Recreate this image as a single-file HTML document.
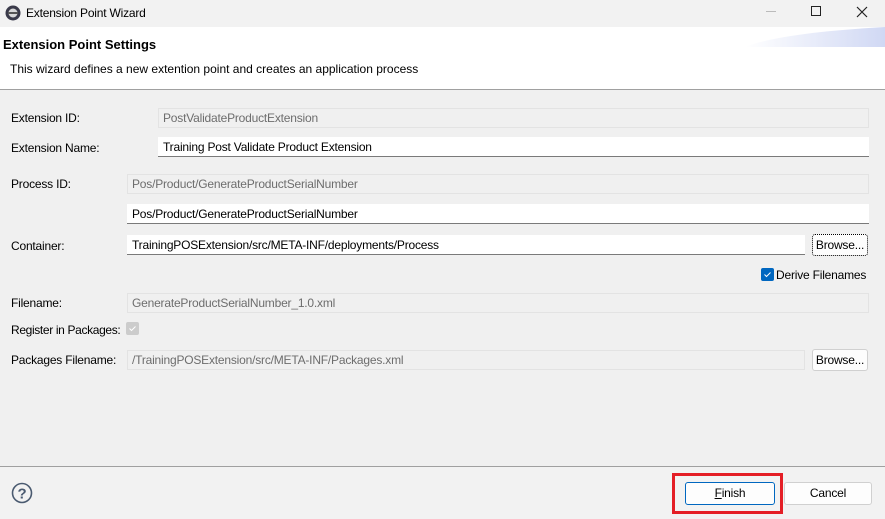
<!DOCTYPE html>
<html><head><style>
*{box-sizing:border-box;margin:0;padding:0}
body{width:885px;height:519px;background:#f0f0f0;font-family:"Liberation Sans",sans-serif;font-size:12px;color:#000;position:relative;overflow:hidden;letter-spacing:-0.2px}
.a{position:absolute;white-space:nowrap}
.in{position:absolute;height:20px;background:#fff;border-bottom:1px solid #7a7a7a;padding:3px 5px;white-space:nowrap}
.dis{position:absolute;height:20px;background:#f0f0f0;border:1px solid #e3e3e3;color:#6d6d6d;padding:2px 4px;white-space:nowrap}
.btn{position:absolute;background:#fdfdfd;border:1px solid #d0d0d0;border-radius:3px;text-align:center;line-height:20px}
</style></head><body>
<div class="a" style="left:0;top:0;width:885px;height:27px;background:#f2f2f2"></div>
<svg class="a" style="left:4px;top:4px" width="18" height="18" viewBox="0 0 18 18"><circle cx="9" cy="9" r="7.5" fill="#3a3a4a"/><circle cx="9" cy="9" r="4.5" fill="#d8d8d8"/><rect x="4" y="8" width="10" height="2" fill="#555"/></svg>
<div class="a" style="left:26px;top:6px">Extension Point Wizard</div>
<div class="a" style="left:766px;top:11px;width:10px;height:1px;background:#bbb"></div>
<div class="a" style="left:811px;top:6px;width:10px;height:10px;border:1px solid #222"></div>
<svg class="a" style="left:856px;top:6px" width="12" height="12"><path d="M1 1L11 11M11 1L1 11" stroke="#222" stroke-width="1.2"/></svg>
<div class="a" style="left:0;top:27px;width:885px;height:63px;background:#fff"></div>
<svg class="a" style="left:740px;top:27px" width="145" height="20"><defs><linearGradient id="g"><stop offset="0" stop-color="#fff"/><stop offset="1" stop-color="#d0d8f4"/></linearGradient></defs><path d="M5 20Q40 6 145 0V20Z" fill="url(#g)"/></svg>
<div class="a" style="left:3px;top:37px;font-weight:bold;font-size:13px;letter-spacing:0">Extension Point Settings</div>
<div class="a" style="left:10px;top:62px;letter-spacing:0">This wizard defines a new extention point and creates an application process</div>
<div class="a" style="left:0;top:89px;width:885px;height:1px;background:#a0a0a0"></div>
<div class="a" style="left:11px;top:111px">Extension ID:</div>
<div class="dis" style="left:158px;top:108px;width:711px">PostValidateProductExtension</div>
<div class="a" style="left:11px;top:141px">Extension Name:</div>
<div class="in" style="left:158px;top:137px;width:711px">Training Post Validate Product Extension</div>
<div class="a" style="left:11px;top:177px">Process ID:</div>
<div class="dis" style="left:127px;top:174px;width:742px">Pos/Product/GenerateProductSerialNumber</div>
<div class="in" style="left:127px;top:204px;width:742px">Pos/Product/GenerateProductSerialNumber</div>
<div class="a" style="left:11px;top:239px">Container:</div>
<div class="in" style="left:127px;top:235px;width:678px">TrainingPOSExtension/src/META-INF/deployments/Process</div>
<div class="btn" style="left:812px;top:234px;width:56px;height:22px;border:1px dotted #000">Browse...</div>
<div class="a" style="left:761px;top:268px;width:13px;height:13px;background:#0067c0;border-radius:2px"></div>
<svg class="a" style="left:761px;top:268px" width="13" height="13"><path d="M3.5 6.5L5.5 8.5L9.5 4.5" stroke="#fff" fill="none" stroke-width="1"/></svg>
<div class="a" style="left:776px;top:268px">Derive Filenames</div>
<div class="a" style="left:11px;top:296px">Filename:</div>
<div class="dis" style="left:127px;top:293px;width:742px">GenerateProductSerialNumber_1.0.xml</div>
<div class="a" style="left:11px;top:323px;letter-spacing:-0.35px">Register in Packages:</div>
<div class="a" style="left:126px;top:322px;width:13px;height:13px;background:#ccc;border-radius:2px"></div>
<svg class="a" style="left:126px;top:322px" width="13" height="13"><path d="M3.5 6.5L5.5 8.5L9.5 4.5" stroke="#fff" fill="none" stroke-width="1"/></svg>
<div class="a" style="left:11px;top:353px">Packages Filename:</div>
<div class="dis" style="left:127px;top:350px;width:678px">/TrainingPOSExtension/src/META-INF/Packages.xml</div>
<div class="btn" style="left:812px;top:349px;width:56px;height:22px">Browse...</div>
<div class="a" style="left:0;top:466px;width:885px;height:1px;background:#a0a0a0"></div>
<div class="a" style="left:0;top:467px;width:885px;height:52px;background:#f2f2f2"></div>
<svg class="a" style="left:11px;top:482px" width="22" height="22"><circle cx="11" cy="11" r="9.5" fill="none" stroke="#4a5a70" stroke-width="1.6"/><text x="11" y="16.5" text-anchor="middle" font-family="Liberation Sans" font-size="15" font-weight="bold" fill="#4a5a70">?</text></svg>
<div class="a" style="left:672px;top:473px;width:111px;height:41px;border:3px solid #e41e26"></div>
<div class="btn" style="left:685px;top:482px;width:90px;height:23px;border:1px solid #0067c0;background:#fdfdfd"><u>F</u>inish</div>
<div class="btn" style="left:784px;top:482px;width:88px;height:23px">Cancel</div>
</body></html>
